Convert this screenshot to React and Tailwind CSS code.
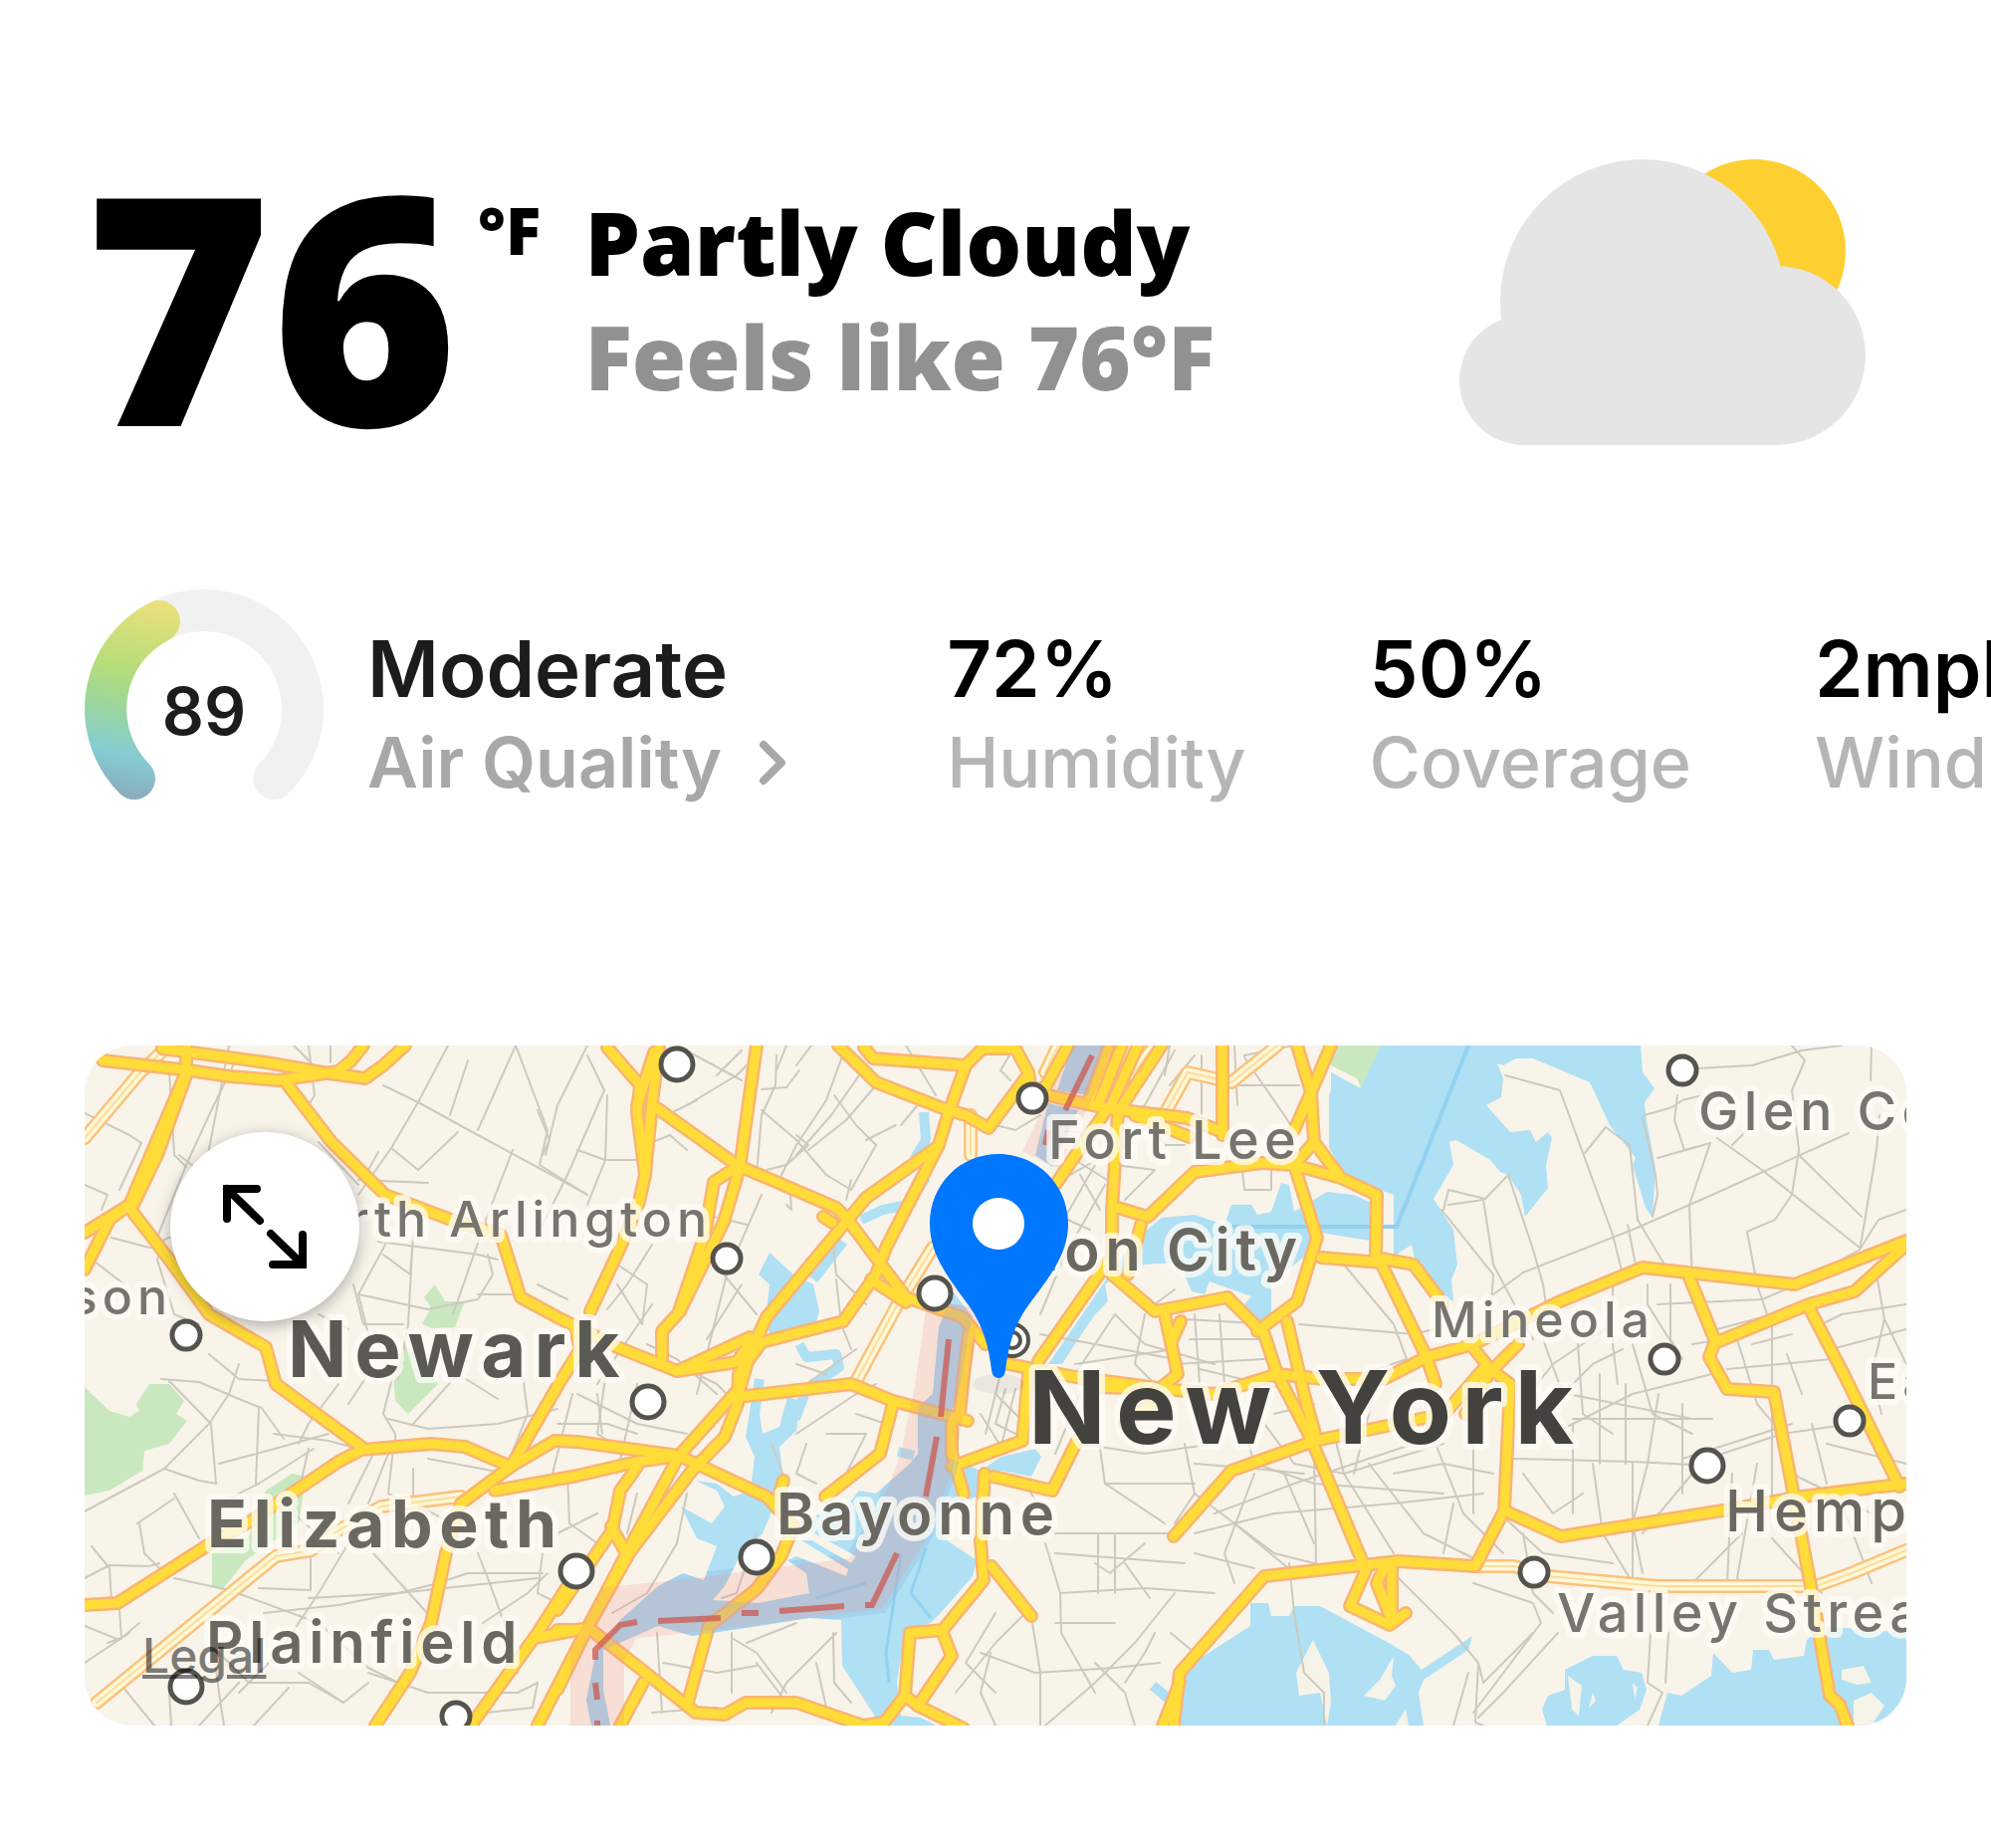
const HIGHWAYS = [
  "103,1065 190,1075 230,1081 280,1085 340,1076 353,1065 365,1050",
  "163,1053 267,1067 330,1078 367,1083 385,1070 407,1050",
  "187,1050 187,1077 150,1163 130,1210 85,1238",
  "187,1080 158,1160 134,1210",
  "134,1207 110,1225 85,1275",
  "287,1087 333,1147 387,1200 453,1225 503,1240 523,1303 560,1323 580,1333 620,1353 680,1377 740,1368 756,1345",
  "680,1377 753,1343",
  "130,1213 170,1265 210,1320 267,1353 277,1390 363,1453",
  "85,1612 118,1610 207,1553 253,1527 297,1497 340,1468 363,1456 433,1450 467,1453 513,1473 557,1447 580,1448 682,1462",
  "578,1335 583,1355 563,1387 513,1473 463,1510 448,1560 433,1630 412,1680 377,1733",
  "497,1497 580,1482 640,1468 682,1462",
  "742,1395 682,1462 632,1555 589,1637 540,1733",
  "765,1348 742,1380 741,1410 728,1443 695,1477 632,1560 589,1637 560,1697",
  "953,1117 943,1150 890,1253 880,1280 847,1327 765,1348 748,1365",
  "940,1153 870,1203 850,1227 770,1323 753,1360 741,1403",
  "827,1222 836,1228",
  "850,1223 880,1263 910,1303 967,1323 990,1350",
  "875,1285 910,1308",
  "660,1113 740,1170 840,1213 850,1223",
  "760,1050 743,1173 727,1227 683,1317 665,1337 665,1365",
  "740,1172 717,1187 708,1240 682,1317",
  "610,1052 643,1090 640,1117 648,1180 642,1207 623,1253 593,1317",
  "662,1052 655,1107 648,1180",
  "657,1057 640,1110",
  "842,1050 880,1087 947,1113 970,1120 993,1133 1010,1110 1030,1083",
  "868,1052 877,1063 970,1070 987,1053 1020,1053 1033,1077 1035,1090",
  "970,1070 953,1117",
  "1053,1100 1110,1113 1193,1123 1228,1137",
  "1073,1050 1050,1092 1035,1095",
  "1113,1053 1093,1107",
  "1127,1050 1103,1110",
  "1143,1050 1115,1113",
  "1167,1050 1123,1117 1117,1215 1117,1280",
  "1110,1117 1060,1190",
  "1140,1120 1195,1142",
  "1228,1050 1228,1140",
  "1303,1050 1317,1097 1320,1147 1347,1183 1383,1200 1382,1263 1420,1270 1450,1310",
  "1337,1050 1317,1097 1300,1135",
  "1320,1147 1300,1170",
  "1123,1213 1153,1222 1200,1177 1267,1168 1300,1170 1347,1183",
  "1300,1170 1323,1243 1303,1307 1263,1337",
  "1233,1303 1270,1340 1283,1380 1316,1443",
  "1117,1280 1160,1317 1233,1303",
  "1133,1280 1146,1230",
  "1170,1320 1183,1380 1165,1395 1100,1393",
  "1186,1327 1178,1345",
  "1113,1267 1043,1367",
  "1013,1370 1080,1383 1170,1395 1220,1400 1283,1380",
  "1170,1400 1130,1430",
  "1293,1327 1310,1400 1321,1440",
  "1327,1263 1387,1268 1433,1363 1442,1390",
  "1283,1380 1330,1385 1390,1385 1433,1363 1480,1350",
  "1480,1350 1567,1307 1650,1273 1803,1290 1915,1246",
  "1477,1350 1497,1375 1517,1390 1511,1517",
  "1525,1350 1497,1378 1472,1420",
  "1697,1283 1723,1347 1717,1363 1735,1395 1782,1398 1801,1497 1819,1593 1838,1703 1848,1712 1856,1733",
  "1727,1347 1817,1310 1863,1297 1915,1250",
  "1817,1313 1852,1380 1908,1493",
  "1511,1517 1568,1543 1731,1517 1810,1503 1915,1490",
  "1511,1517 1482,1573 1405,1568 1270,1583 1220,1640 1185,1680 1179,1733",
  "1185,1690 1168,1733",
  "1316,1443 1368,1567",
  "1179,1543 1237,1477 1321,1447 1451,1420 1490,1375",
  "1372,1577 1356,1613 1396,1632 1412,1620",
  "1398,1572 1398,1627 1383,1590 1390,1575",
  "741,1403 855,1390 897,1407 972,1427",
  "973,1340 968,1380 964,1420 956,1430 956,1460 968,1500",
  "897,1410 884,1460 829,1503",
  "787,1487 780,1510",
  "682,1462 770,1503 797,1533 785,1562 760,1596 712,1633 690,1713",
  "956,1473 1027,1447 1033,1380",
  "998,1483 1057,1497 1082,1447",
  "989,1480 985,1547 988,1587 947,1637 914,1640 909,1703 888,1730 867,1733 800,1710 749,1710 728,1722 699,1720 594,1637 560,1637",
  "947,1640 956,1663 922,1713 968,1736",
  "909,1703 922,1713",
  "996,1573 1036,1623",
  "640,1473 623,1497 615,1537 560,1617",
  "614,1533 630,1562",
  "570,1593 540,1640 473,1733",
  "585,1636 537,1645",
  "646,1690 623,1733",
];

const PALE_ROADS = [
  "97,1710 277,1563 313,1557 340,1537 383,1513 463,1503",
  "85,1143 140,1078 167,1052",
  "937,1253 900,1313 860,1387",
  "975,1120 975,1160",
  "1283,1050 1237,1087 1193,1077 1173,1113",
  "1160,1050 1137,1080",
  "1063,1050 1050,1077",
  "1484,1573 1521,1573 1554,1583 1665,1593 1824,1593 1860,1580 1915,1557",
];

const STREETS = [
  "230,1050 205,1180 180,1160", "85,1118 130,1140 142,1148 120,1195", "170,1075 175,1160 187,1172", "240,1058 210,1120 187,1170 155,1250",
  "310,1050 316,1100 310,1110", "295,1050 313,1068", "332,1050 332,1067", "385,1090 420,1107 480,1140 545,1175 590,1200",
  "450,1050 420,1107 393,1153 360,1200", "470,1065 452,1120", "518,1050 480,1135", "518,1050 550,1135 542,1170 590,1200",
  "393,1153 420,1175 460,1137", "515,1155 490,1220 455,1320", "360,1185 430,1188", "320,1147 360,1190", "380,1157 370,1175",
  "590,1050 560,1110 548,1160", "590,1060 607,1095 570,1180 545,1230", "610,1100 608,1165 640,1165", "580,1155 608,1165 590,1210",
  "540,1115 552,1145 545,1160", "653,1148 673,1140 690,1155", "690,1110 740,1080 760,1060", "670,1120 700,1105", "745,1055 720,1080",
  "780,1060 779,1090 765,1120 760,1180", "790,1050 780,1075", "803,1075 790,1092 765,1094", "765,1115 800,1145 830,1180 855,1195",
  "850,1050 830,1105 800,1150 780,1190", "870,1070 835,1120 800,1160", "880,1090 850,1125 812,1155", "838,1100 860,1130 880,1150 855,1195",
  "800,1140 812,1150 790,1170 770,1175", "855,1185 850,1205", "680,1050 745,1085", "910,1050 940,1100", "815,1050 800,1070",
  "900,1130 870,1145", "930,1100 905,1130", "765,1200 730,1280 700,1400", "710,1220 750,1230", "790,1210 795,1215 793,1187",
  "727,1280 760,1320", "745,1290 710,1345", "837,1250 840,1280 860,1300 870,1310", "840,1285 845,1330 855,1355", "655,1250 630,1290 610,1315",
  "620,1270 650,1290 645,1330 620,1290", "540,1290 570,1305", "655,1310 600,1390", "810,1390 860,1355", "800,1370 830,1380",
  "700,1380 720,1390 740,1410", "610,1370 600,1440 615,1450", "650,1350 680,1365 720,1400", "580,1400 640,1430 690,1440",
  "190,1235 165,1245 158,1265 175,1320 200,1330", "112,1243 150,1253 165,1255", "95,1267 125,1290", "85,1190 108,1200 102,1215",
  "380,1247 480,1260 500,1265", "387,1250 360,1300 375,1360", "385,1260 412,1280 415,1240 410,1330 400,1385", "355,1290 365,1330 405,1330",
  "360,1300 430,1315 480,1305 495,1280 490,1260", "320,1320 350,1335", "370,1380 350,1410", "480,1300 520,1300", "210,1360 240,1385 275,1387",
  "162,1385 200,1388 240,1405 260,1413", "240,1370 230,1400 210,1430 165,1475 85,1518", "170,1387 212,1430 217,1490", "260,1413 257,1490",
  "220,1470 265,1458 330,1440", "275,1440 330,1447 363,1456", "165,1475 200,1487 217,1490", "262,1413 285,1445", "220,1510 260,1490 315,1455",
  "310,1455 295,1520 340,1560", "175,1500 200,1545", "85,1585 110,1572 150,1573 160,1570", "140,1530 145,1560 160,1575", "92,1553 110,1575 112,1610",
  "138,1530 175,1505", "120,1617 122,1645 108,1650", "85,1633 120,1647 140,1630", "85,1670 130,1640", "175,1585 230,1597 320,1630 370,1675 410,1695",
  "312,1560 312,1597 260,1595", "350,1550 320,1600 280,1660 240,1700", "265,1620 340,1612 400,1600 540,1585", "375,1560 420,1610 460,1655",
  "310,1605 400,1600 440,1590 470,1580 545,1580", "220,1660 250,1690 310,1690 345,1710", "390,1425 430,1435 500,1430 560,1415",
  "340,1390 310,1430 300,1450", "395,1380 385,1420 397,1440 397,1450", "415,1430 460,1380 500,1405", "525,1380 530,1420 510,1470",
  "380,1450 350,1510", "390,1460 370,1510", "415,1475 415,1510 455,1530", "395,1455 390,1500 430,1520", "430,1465 510,1480",
  "480,1560 490,1585 510,1640 520,1680", "545,1560 540,1600 560,1610", "485,1630 530,1600 550,1580", "370,1680 430,1700 520,1700 540,1690",
  "240,1690 200,1733", "215,1660 220,1700 225,1733", "120,1690 155,1733", "170,1700 172,1733", "290,1695 255,1733", "370,1690 345,1710 300,1680",
  "490,1720 535,1715 540,1690", "575,1400 555,1480", "560,1430 610,1430 640,1440", "600,1400 605,1440", "640,1390 620,1480",
  "775,1450 790,1490", "800,1440 860,1400 880,1390", "830,1440 870,1440 850,1480", "860,1420 890,1430", "810,1450 800,1480 820,1490",
  "690,1500 680,1550 650,1600 615,1620", "570,1480 572,1530 600,1550", "560,1540 600,1520", "640,1500 630,1540", "760,1540 740,1600 725,1605",
  "660,1640 665,1720", "666,1670 720,1680 760,1673", "735,1640 735,1700", "735,1645 760,1660 790,1700", "840,1640 790,1690 775,1720",
  "837,1640 838,1690 855,1710", "820,1670 830,1715", "655,1720 720,1715", "750,1650 800,1630", "760,1670 790,1710",
  "1040,1200 1110,1160", "1020,1050 1005,1075 1015,1085", "1000,1130 1020,1135 1045,1120", "1085,1180 1105,1215", "1100,1170 1060,1240 1010,1310",
  "1110,1190 1070,1260 1045,1320", "1050,1215 1095,1235", "1080,1165 1120,1190", "1135,1140 1120,1170 1160,1175 1130,1205", "1150,1120 1170,1150 1190,1150",
  "1180,1055 1150,1110 1130,1120", "1200,1060 1175,1090", "1245,1145 1250,1195 1277,1195 1277,1170", "1240,1050 1243,1110", "1207,1060 1207,1120",
  "1170,1080 1175,1050", "1250,1062 1290,1120 1300,1135", "1235,1090 1305,1090", "1250,1060 1300,1050", "1120,1320 1080,1380", "1120,1320 1150,1350 1220,1370",
  "1045,1340 1100,1350 1180,1365", "1150,1320 1140,1370 1160,1390", "1200,1320 1205,1390", "1225,1320 1230,1390", "1190,1325 1280,1330",
  "1195,1345 1275,1345", "1180,1370 1270,1365", "1205,1375 1290,1395", "1080,1370 1180,1355", "1180,1295 1160,1310", "1350,1270 1400,1330 1413,1365",
  "1305,1330 1420,1340 1440,1335", "1413,1365 1340,1390", "1455,1210 1490,1205 1497,1250 1500,1270 1540,1345", "1450,1215 1455,1195 1492,1204 1515,1180",
  "1448,1215 1500,1280 1498,1310", "1515,1180 1540,1255 1550,1290 1553,1310", "1512,1080 1567,1095 1620,1240 1630,1280", "1592,1158 1613,1132 1637,1150 1645,1225",
  "1500,1300 1530,1278 1640,1235 1720,1200 1857,1138", "1645,1225 1675,1275", "1635,1230 1645,1280", "1685,1100 1682,1125 1692,1155 1703,1152",
  "1705,1073 1760,1070 1810,1055 1850,1050", "1800,1050 1813,1065 1800,1095 1807,1155 1800,1200 1783,1225 1755,1237 1765,1290 1775,1320",
  "1652,1120 1680,1112 1690,1105 1710,1100", "1650,1122 1663,1180 1665,1200 1660,1222", "1665,1163 1718,1148", "1718,1148 1697,1210 1700,1290",
  "1725,1143 1770,1175 1868,1253 1870,1245 1885,1155 1888,1120", "1807,1160 1870,1222", "1740,1150 1755,1135", "1880,1050 1879,1085",
  "1915,1215 1887,1225 1868,1255 1850,1265", "1655,1290 1655,1310 1680,1350", "1678,1290 1678,1345 1690,1365", "1665,1310 1770,1305 1830,1280",
  "1725,1335 1800,1315", "1620,1290 1620,1350 1625,1390", "1612,1335 1560,1370 1540,1395", "1550,1345 1570,1400 1600,1370 1630,1355",
  "1585,1350 1590,1420 1620,1440", "1640,1350 1660,1420 1700,1440", "1700,1350 1730,1345", "1720,1380 1640,1400 1560,1440", "1575,1400 1700,1425",
  "1745,1345 1765,1410 1790,1440", "1780,1330 1780,1390", "1735,1375 1840,1365", "1795,1360 1810,1400", "1830,1330 1850,1320 1915,1310",
  "1885,1280 1893,1325 1915,1370", "1893,1325 1880,1380 1890,1420", "1840,1355 1915,1335", "1760,1350 1800,1340", "1580,1425 1720,1425",
  "1607,1380 1607,1470", "1633,1390 1633,1470", "1666,1400 1655,1470 1640,1530 1650,1580", "1690,1410 1690,1500", "1520,1465 1640,1468 1720,1472",
  "1530,1480 1560,1520 1590,1500", "1580,1430 1580,1520", "1600,1470 1610,1540 1640,1590", "1650,1540 1700,1480", "1740,1480 1735,1590", "1765,1470 1745,1585",
  "1730,1460 1790,1440 1860,1430", "1690,1465 1800,1430", "1780,1400 1780,1500 1800,1530", "1820,1430 1835,1490", "1835,1450 1915,1470", "1800,1480 1880,1520",
  "1750,1540 1700,1590", "1780,1545 1830,1600", "1850,1510 1880,1590", "1640,1470 1640,1590", "1270,1430 1300,1470 1350,1480 1450,1450",
  "1200,1470 1260,1475 1310,1480", "1280,1420 1320,1410", "1240,1400 1260,1470 1320,1490 1450,1500", "1340,1440 1350,1480 1400,1560",
  "1220,1520 1300,1490 1420,1450", "1200,1540 1280,1520 1400,1510 1490,1500", "1260,1480 1230,1560 1240,1590", "1200,1500 1280,1560 1340,1575",
  "1290,1480 1320,1550", "1320,1460 1322,1570", "1375,1470 1430,1540 1480,1565", "1430,1420 1470,1520 1510,1560", "1380,1400 1360,1480",
  "1200,1560 1260,1575", "1240,1530 1300,1580", "1400,1480 1450,1470 1500,1480", "1460,1510 1450,1560", "1480,1430 1480,1520",
  "1085,1400 1060,1460", "1100,1420 1110,1490 1170,1530", "1085,1450 1150,1460 1220,1450", "1110,1490 1200,1490", "1190,1450 1200,1500 1180,1530",
  "1030,1490 1060,1540 1180,1540", "1050,1550 1065,1600 1066,1640 1100,1700", "1103,1540 1103,1600", "1120,1540 1120,1600", "1060,1560 1190,1570",
  "1065,1600 1150,1595 1220,1600", "1130,1570 1155,1605", "1150,1550 1115,1580 1100,1570", "1060,1630 1120,1630", "1180,1600 1140,1650 1100,1690 1050,1733",
  "985,1660 1040,1680 1120,1675 1165,1670", "1000,1620 970,1670 1000,1700", "1036,1623 1045,1680 1045,1733", "1100,1670 1130,1700 1140,1733",
  "960,1700 1000,1650 1030,1620", "1000,1733 985,1700 995,1660", "1176,1640 1200,1660", "1130,1690 1150,1660 1160,1640",
  "1295,1570 1300,1620 1310,1680 1330,1700 1330,1733", "1400,1580 1460,1640 1485,1670 1490,1690 1540,1640", "1480,1590 1540,1610 1548,1630 1480,1720",
  "1485,1670 1482,1730 1490,1733", "1565,1640 1510,1700 1485,1725", "1475,1680 1460,1733", "1658,1640 1655,1690 1670,1700 1655,1733",
  "1676,1640 1673,1690", "1530,1540 1540,1600 1560,1620", "1512,1525 1550,1560 1620,1570",
  "1010,1395 1000,1430 1020,1440", "1000,1400 1025,1425", "985,1420 1010,1460", "1005,1380 990,1440", "1020,1395 1005,1455",
];

const WATER =
  "M1387 1050L1367 1093L1337 1077V1095L1335 1100V1153L1353 1183L1400 1200V1262L1418 1250L1422 1268L1447 1300L1460 1307L1458 1285L1464 1270L1460 1235L1440 1204L1460 1170L1456 1147L1463 1145L1497 1165L1507 1177L1515 1180L1528 1200L1532 1222L1555 1193L1553 1170L1559 1143L1555 1137L1543 1147L1537 1135L1517 1137L1493 1110L1508 1102L1510 1083L1504 1068L1510 1070L1523 1063L1540 1063L1597 1087L1617 1130L1643 1163L1640 1170L1653 1213L1660 1223L1663 1173L1653 1120L1652 1107L1662 1093L1650 1077L1648 1050Z" +
  "M1125 1265L1053 1370H1067L1083 1345L1100 1320L1113 1307L1110 1290L1123 1280L1150 1270L1180 1268L1190 1280L1197 1297L1210 1300L1215 1287L1257 1302L1250 1310L1263 1327L1277 1322V1288L1317 1257L1320 1237L1382 1247V1210L1360 1200L1333 1197L1300 1217L1295 1190L1287 1188L1277 1217L1263 1220L1257 1210H1237L1230 1230L1200 1220L1167 1223L1140 1245Z" +
  "M1183 1680L1256 1633V1610H1274L1277 1623H1295L1300 1613H1326L1395 1650L1415 1662L1428 1677L1479 1643L1475 1657L1430 1687L1425 1700L1430 1733H1179Z" +
  "M1572 1677L1600 1663H1624L1631 1677L1649 1680L1654 1697L1647 1717L1624 1733H1554L1549 1717L1555 1703L1572 1697Z" +
  "M1675 1700L1689 1703L1719 1683L1721 1660L1740 1680L1759 1677L1761 1657H1777L1782 1667L1812 1663L1815 1647L1830 1633L1915 1640V1733H1666Z" +
  "M937 1400L943 1333L957 1297L977 1323L973 1340L963 1400L951 1430V1463L985 1477L1006 1463L1040 1455L1046 1463L1036 1483L1006 1477L989 1483L981 1503L956 1513L951 1547L981 1567L977 1583L951 1613L935 1630L909 1637L901 1690L905 1723L925 1725L940 1733H885L846 1673L845 1627L813 1625L762 1633L695 1643L661 1633L606 1657V1697L613 1733H594L589 1707L598 1663L623 1627L661 1593L686 1580L707 1587L720 1553L700 1545L684 1513L715 1530L728 1513L720 1497L699 1487L720 1490L737 1503L754 1497L758 1463L749 1443L754 1413H762L766 1440L783 1433L791 1403L804 1407L800 1437L783 1453L787 1490L779 1510L766 1540L741 1567L728 1593L716 1607L762 1610L813 1600L810 1580L791 1567L800 1563L850 1583L852 1576L805 1547H815L855 1570L860 1563L800 1530L855 1507L863 1497L880 1500L914 1470L922 1460V1413Z" +
  "M773 1258L797 1280L817 1290L823 1317L817 1337H800L773 1343L770 1317L773 1290L762 1280Z" +
  "M1077 1050H1111L1093 1100L1062 1095ZM1053 1108L1083 1115L1057 1172L1040 1160Z";

const CREEKS = [
  "M847 1247L817 1285", "M865 1225L887 1215L912 1210L930 1183", "M918 1165L930 1145L928 1117",
  "M803 1350L810 1363L840 1360L843 1373L810 1395L799 1425", "M763 1385L758 1420", "M902 1458L918 1462", "M1158 1693L1185 1715",
];

const ISLANDS =
  "M1319 1647L1302 1680L1305 1703L1326 1700L1333 1733L1337 1710L1335 1680ZM1400 1663L1386 1687L1370 1703L1391 1708L1402 1693L1398 1683ZM1575 1683L1589 1693L1586 1723L1579 1717ZM1850 1677L1872 1673L1880 1690L1865 1692L1850 1687ZM1862 1708L1880 1700L1893 1713L1880 1733H1862ZM1412 1716L1415 1733H1402ZM1600 1700L1603 1708L1596 1715ZM1640 1690L1645 1695L1642 1706Z";

const PARKS =
  "M85 1393L110 1417L130 1423L140 1417L137 1410L150 1390H170L185 1407L177 1420L188 1427L170 1450L145 1457L143 1477L110 1497L85 1502Z" +
  "M437 1290L447 1307H467L457 1333L434 1334L424 1330L433 1313L426 1303Z" +
  "M407 1350L420 1365L440 1390L410 1420L397 1407L395 1380Z" +
  "M267 1497L293 1480L307 1483L300 1530L247 1567L223 1597L213 1593V1560L250 1543Z" +
  "M1337 1050H1388L1383 1077L1367 1093L1363 1083L1337 1070Z";

const BORDER = "M600 1740V1662L622 1620L700 1612L870 1590L905 1535L930 1470L945 1400L958 1310";
const BORDER_NORTH = "M1110 1030L1045 1165";
const BORDER_DASHES =
  "M953 1345L945 1423M941 1443L930 1503M901 1560L876 1612H869M848 1613L783 1618M762 1620H745M724 1625L661 1628M640 1629L623 1632L598 1657V1667M598 1690L600 1707M600 1728V1733M1097 1060L1070 1115M1053 1135L1050 1150";

const LABELS = [
  { text: "North Arlington", x: 715, y: 1242, anchor: "end", cls: "fill-[#777570] text-[50px] font-medium" },
  { text: "Madison", x: 173, y: 1320, anchor: "end", cls: "fill-[#777570] text-[50px] font-medium" },
  { text: "Newark", x: 289, y: 1383, anchor: "start", cls: "fill-[#5b5954] text-[78px] font-bold" },
  { text: "Elizabeth", x: 208, y: 1554, anchor: "start", cls: "fill-[#6b6861] text-[66px] font-bold" },
  { text: "Plainfield", x: 207, y: 1670, anchor: "start", cls: "fill-[#6b6861] text-[58px] font-semibold" },
  { text: "Bayonne", x: 780, y: 1541, anchor: "start", cls: "fill-[#6b6861] text-[58px] font-semibold" },
  { text: "Fort Lee", x: 1053, y: 1164, anchor: "start", cls: "fill-[#77746f] text-[54px] font-medium" },
  { text: "Union City", x: 1309, y: 1276, anchor: "end", cls: "fill-[#6b6861] text-[58px] font-semibold" },
  { text: "Glen Cove", x: 1706, y: 1135, anchor: "start", cls: "fill-[#777570] text-[54px] font-medium" },
  { text: "Mineola", x: 1438, y: 1343, anchor: "start", cls: "fill-[#777570] text-[50px] font-medium" },
  { text: "East Meadow", x: 1876, y: 1405, anchor: "start", cls: "fill-[#777570] text-[50px] font-medium" },
  { text: "Hempstead", x: 1733, y: 1538, anchor: "start", cls: "fill-[#6b6861] text-[58px] font-medium" },
  { text: "Valley Stream", x: 1564, y: 1639, anchor: "start", cls: "fill-[#777570] text-[54px] font-medium" },
  { text: "New York", x: 1033, y: 1450, anchor: "start", cls: "fill-[#43423f] text-[102px] font-bold" },
];

const TOWNS = [
  [680, 1069, 16], [730, 1264, 14], [939, 1299, 16], [1037, 1103, 14], [187, 1341, 14], [651, 1408, 16], [579, 1578, 16],
  [760, 1564, 16], [187, 1694, 16], [458, 1724, 14], [1690, 1075, 14], [1672, 1365, 14], [1858, 1427, 14], [1715, 1472, 16], [1541, 1579, 14],
];

function Lines({ data, className }) {
  return (
    <g className={className} fill="none" strokeLinejoin="round" strokeLinecap="round">
      {data.map((points) => (
        <polyline key={points} points={points} />
      ))}
    </g>
  );
}

function CityMap() {
  return (
    <svg viewBox="85 1050 1830 683" preserveAspectRatio="xMidYMid slice" className="block h-auto w-full bg-[#f8f4ea]" role="img" aria-label="Map of New York and surrounding area">
      <defs>
        <clipPath id="water">
          <path d={WATER} />
        </clipPath>
      </defs>
      <path d={PARKS} className="fill-[#c9e8bf]" />
      <path d={WATER} className="fill-[#afe0f4]" />
      <g className="stroke-[#afe0f4]" fill="none" strokeWidth="10" strokeLinejoin="round">
        {CREEKS.map((d) => (
          <path key={d} d={d} />
        ))}
      </g>
      <path d={ISLANDS} className="fill-[#f6f3e8]" />
      <path d="M1475 1050L1403 1232H1235" fill="none" strokeWidth="4" className="stroke-[#93d1f0]" />
      <path d="M905 1560L890 1660L893 1690M930 1555L915 1600L935 1625M870 1590L820 1605" fill="none" strokeWidth="3" className="stroke-[#93d1f0]" />
      <Lines data={STREETS} className="stroke-[#ccc9bf] stroke-2" />
      <Lines data={PALE_ROADS} className="stroke-[#fbc27c] stroke-[14px]" />
      <Lines data={PALE_ROADS} className="stroke-[#fff8d6] stroke-[9px]" />
      <Lines data={PALE_ROADS} className="stroke-[#fcdc9c] stroke-2" />
      <Lines data={HIGHWAYS} className="stroke-[#f9b571] stroke-[14px]" />
      <Lines data={HIGHWAYS} className="stroke-[#ffdc38] stroke-[9px]" />
      <g clipPath="url(#water)" fill="none">
        <path d={BORDER} strokeWidth="64" className="stroke-[#8fb4da]/30" />
        <path d={BORDER_NORTH} strokeWidth="50" className="stroke-[#8fb4da]/30" />
      </g>
      <path d={BORDER} fill="none" strokeWidth="54" className="stroke-[#f48a80]/20" />
      <path d={BORDER_NORTH} fill="none" strokeWidth="40" className="stroke-[#f48a80]/20" />
      <path d={BORDER_DASHES} fill="none" strokeWidth="6" className="stroke-[#cc5a50]/75" />

      {TOWNS.map(([x, y, r]) => (
        <circle key={x + "-" + y} cx={x} cy={y} r={r} strokeWidth="5" className="fill-white stroke-[#55534e]" />
      ))}
      <circle cx="1017" cy="1346" r="16" strokeWidth="4" className="fill-white stroke-[#55534e]" />
      <circle cx="1017" cy="1346" r="8" strokeWidth="4" className="fill-white stroke-[#55534e]" />

      <g className="font-['Inter',sans-serif]">
        {LABELS.map((l) => (
          <text
            key={l.text}
            x={l.x}
            y={l.y}
            textAnchor={l.anchor}
            paintOrder="stroke"
            strokeLinejoin="round"
            className={l.cls + " stroke-[#fdfbf4]/80 stroke-[12px] tracking-widest"}
          >
            {l.text}
          </text>
        ))}
      </g>

      <ellipse cx="1003" cy="1390" rx="26" ry="10" className="fill-black/5" />
      <path
        d="M1003 1159C964 1159 934 1190 934 1229C934 1262 955 1286 973 1311C988 1332 993 1352 996 1376Q997 1384 1003 1384Q1009 1384 1010 1376C1013 1352 1018 1332 1033 1311C1051 1286 1073 1262 1073 1229C1073 1190 1042 1159 1003 1159Z"
        className="fill-[#0077ff]"
      />
      <circle cx="1003" cy="1229" r="26" className="fill-white" />
    </svg>
  );
}

function PartlyCloudyIcon() {
  return (
    <svg viewBox="1466 160 408 287" className="w-[408px] shrink-0" role="img" aria-label="Partly cloudy">
      <circle cx="1762" cy="252" r="92" className="fill-[#fecf30]" />
      <g className="fill-[#e5e5e5]">
        <circle cx="1650" cy="303" r="143" />
        <circle cx="1784" cy="357" r="90" />
        <circle cx="1531" cy="382" r="65" />
        <rect x="1531" y="300" width="253" height="147" />
      </g>
    </svg>
  );
}

function AirGauge() {
  return (
    <span className="grid shrink-0 place-items-center">
      <svg viewBox="85 592 240 211" className="col-start-1 row-start-1 w-60" aria-hidden="true">
        <defs>
          <linearGradient id="aqi" gradientUnits="userSpaceOnUse" x1="165" y1="610" x2="125" y2="800">
            <stop offset="0" stopColor="#e8e07c" />
            <stop offset="0.35" stopColor="#b5dd7a" />
            <stop offset="0.55" stopColor="#9bd69a" />
            <stop offset="0.78" stopColor="#86cdd2" />
            <stop offset="1" stopColor="#8aacbd" />
          </linearGradient>
        </defs>
        <g fill="none" strokeWidth="42" strokeLinecap="round">
          <path d="M135 782A99 99 0 1 1 275 782" className="stroke-[#f1f1f1]" />
          <path d="M135 782A99 99 0 0 1 160 624" stroke="url(#aqi)" />
        </g>
      </svg>
      <span className="col-start-1 row-start-1 pt-8 text-[66px] leading-none font-semibold text-[#1c1c1c]">89</span>
    </span>
  );
}

function Stat({ value, label }) {
  return (
    <div className="shrink-0">
      <div className="text-[78px] leading-[96px] font-semibold text-black">{value}</div>
      <div className="text-[70px] leading-[92px] font-medium text-[#b5b5b5]">{label}</div>
    </div>
  );
}

export default function App() {
  return (
    <main className="min-h-screen overflow-hidden bg-white pt-40 pb-[123px]">
      <header className="flex h-[287px] items-center justify-between pr-[126px] pl-[85px] font-['Open_Sans',sans-serif]">
        <div className="flex items-start">
          <h1 className="flex items-start font-extrabold">
            <span className="text-[320px] leading-[300px]">76</span>
            <span className="pt-9 pl-5 text-[66px] leading-[80px]">°F</span>
          </h1>
          <div className="pt-8 pl-11 text-[88px] leading-[115px] font-extrabold">
            <div>Partly Cloudy</div>
            <div className="text-[#919191]">Feels like 76°F</div>
          </div>
        </div>
        <PartlyCloudyIcon />
      </header>

      <section aria-label="Current conditions" className="mt-[145px] flex items-start gap-40 pl-[85px] font-['Inter',sans-serif] whitespace-nowrap">
        <button type="button" className="flex shrink-0 items-start gap-11 text-left">
          <AirGauge />
          <span className="block pt-8">
            <span className="block text-[78px] leading-[96px] font-semibold text-[#1c1c1c]">Moderate</span>
            <span className="flex items-center gap-9 text-[70px] leading-[92px] font-semibold text-[#a8a8a8]">
              Air Quality
              <svg viewBox="0 0 30 46" className="w-[30px]" fill="none" stroke="currentColor" strokeWidth="8" strokeLinecap="round" strokeLinejoin="round" aria-hidden="true">
                <path d="M6 5L24 23L6 41" />
              </svg>
            </span>
          </span>
        </button>
        <div className="flex shrink-0 gap-31 pt-8">
          <Stat value="72%" label="Humidity" />
          <Stat value="50%" label="Coverage" />
          <Stat value="2mph" label="Wind" />
        </div>
      </section>

      <section aria-label="Map" className="relative mx-[85px] mt-[238px] overflow-hidden rounded-[48px]">
        <CityMap />
        <button
          type="button"
          aria-label="Expand map"
          className="absolute top-[87px] left-[86px] grid size-[190px] place-items-center rounded-full bg-white shadow-[0_4px_16px_rgba(0,0,0,0.3)]"
        >
          <svg viewBox="0 0 88 88" className="w-[88px]" fill="none" stroke="black" strokeWidth="8" strokeLinecap="round" aria-hidden="true">
            <path d="M36 6H6V36M6 6L39 38M52 82H82V52M82 82L50 51" />
          </svg>
        </button>
        <a href="#legal" className="absolute bottom-[44px] left-[58px] font-['Inter',sans-serif] text-[48px] leading-[52px] font-medium text-black/50 underline decoration-4">
          Legal
        </a>
      </section>
    </main>
  );
}
